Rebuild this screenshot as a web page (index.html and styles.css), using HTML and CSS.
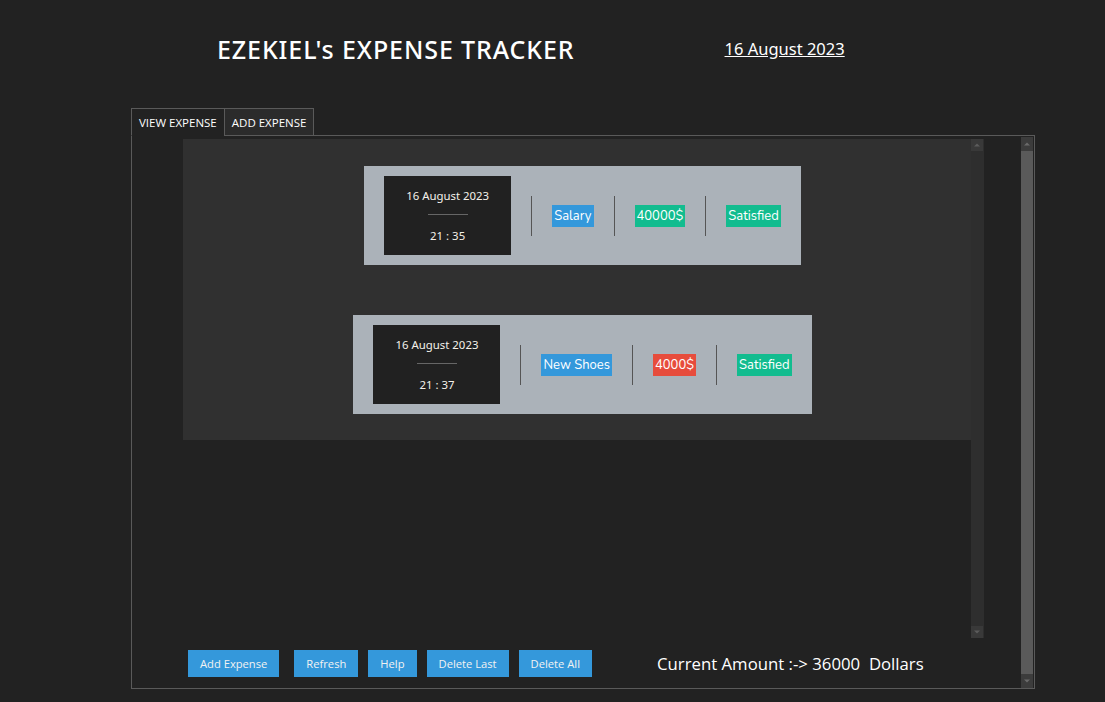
FILE: index.html
```html
<!DOCTYPE html>
<html>
<head>
<meta charset="utf-8">
<title>Expense Tracker</title>
<link rel="stylesheet" href="styles.css">
</head>
<body>
<header class="header">
  <h1 class="title">EZEKIEL's EXPENSE TRACKER</h1>
  <a class="today" href="#">16 August 2023</a>
</header>
<main class="tabs">
  <nav class="tabbar">
    <div class="tab active">VIEW EXPENSE</div>
    <div class="tab">ADD EXPENSE</div>
    <div class="tabfill"></div>
  </nav>
  <section class="panel">
    <div class="page">
      <div class="scrollarea">
        <div class="scrollcontent">
          <div class="list">
            <div class="card">
              <div class="stamp">
                <div class="stamp-date">16 August 2023</div>
                <div class="stamp-line"></div>
                <div class="stamp-time">21 : 35</div>
              </div>
              <div class="sep"></div>
              <span class="badge blue">Salary</span>
              <div class="sep"></div>
              <span class="badge green">40000$</span>
              <div class="sep"></div>
              <span class="badge green">Satisfied</span>
            </div>
            <div class="card">
              <div class="stamp">
                <div class="stamp-date">16 August 2023</div>
                <div class="stamp-line"></div>
                <div class="stamp-time">21 : 37</div>
              </div>
              <div class="sep"></div>
              <span class="badge blue">New Shoes</span>
              <div class="sep"></div>
              <span class="badge red">4000$</span>
              <div class="sep"></div>
              <span class="badge green">Satisfied</span>
            </div>
          </div>
        </div>
        <div class="vscroll inner">
          <div class="sbtn"><svg width="12" height="12" viewBox="0 0 12 12"><path d="M3 7.5 L6 4.5 L9 7.5 Z" fill="#5c5c5c"/></svg></div>
          <div class="strack"></div>
          <div class="sbtn"><svg width="12" height="12" viewBox="0 0 12 12"><path d="M3 4.5 L6 7.5 L9 4.5 Z" fill="#5c5c5c"/></svg></div>
        </div>
      </div>
      <div class="actions">
        <button class="btn">Add Expense</button>
        <button class="btn gap-lg">Refresh</button>
        <button class="btn">Help</button>
        <button class="btn">Delete Last</button>
        <button class="btn">Delete All</button>
        <div class="amount">Current Amount :-&gt; 36000  Dollars</div>
      </div>
    </div>
    <div class="vscroll outer">
      <div class="sbtn"><svg width="12" height="12" viewBox="0 0 12 12"><path d="M3 7.5 L6 4.5 L9 7.5 Z" fill="#6a6a6a"/></svg></div>
      <div class="shandle"></div>
      <div class="sbtn"><svg width="12" height="12" viewBox="0 0 12 12"><path d="M3 4.5 L6 7.5 L9 4.5 Z" fill="#6a6a6a"/></svg></div>
    </div>
  </section>
</main>
</body>
</html>
```
FILE: styles.css
```css
html, body {
  margin: 0;
  padding: 0;
}
body {
  background: #222222;
  width: 1105px;
  height: 702px;
  overflow: hidden;
  font-family: "Open Sans", "Noto Sans", sans-serif;
  color: #ffffff;
}
.header {
  display: flex;
  align-items: center;
  height: 108px;
  box-sizing: border-box;
  padding-bottom: 10px;
}
.title {
  margin: 0 0 0 217px;
  font-family: "Noto Sans", "Open Sans", sans-serif;
  font-weight: 500;
  font-size: 25px;
  line-height: 34px;
  letter-spacing: 0.9px;
  color: #ffffff;
}
.today {
  margin-left: 150px;
  font-family: "Noto Sans", sans-serif;
  font-size: 16.5px;
  line-height: 22px;
  color: #ffffff;
  text-decoration: underline;
}
.tabs {
  margin-left: 131px;
  width: 904px;
}
.tabbar {
  display: flex;
  height: 28px;
}
.tab {
  box-sizing: border-box;
  height: 28px;
  padding: 0 7px;
  font-family: "Open Sans", sans-serif;
  font-size: 11.5px;
  line-height: 27px;
  color: #ffffff;
  border: 1px solid #5a5a5a;
  border-bottom: 1px solid #5a5a5a;
  background: #2b2b2b;
}
.tab.active {
  background: #222222;
  border-bottom-color: #222222;
  border-right: none;
}
.tabfill {
  flex: 1;
  border-bottom: 1px solid #5a5a5a;
}
.panel {
  display: flex;
  height: 553px;
  box-sizing: border-box;
  border: 1px solid #5a5a5a;
  border-top: none;
}
.page {
  flex: 1;
  padding: 3px 0 0 51px;
}
.scrollarea {
  display: flex;
  width: 801px;
  height: 499px;
}
.scrollcontent {
  width: 788px;
}
.list {
  background: #303030;
  height: 301px;
  box-sizing: border-box;
  padding: 27px 0 0 11px;
  display: flex;
  flex-direction: column;
  align-items: center;
  gap: 50px;
}
.card {
  display: flex;
  align-items: center;
  gap: 20px;
  background: #abb2b9;
  padding: 10px 20px;
  height: 99px;
  box-sizing: border-box;
}
.stamp {
  width: 127px;
  height: 79px;
  background: #212121;
  display: flex;
  flex-direction: column;
  align-items: center;
  font-family: "Noto Sans", sans-serif;
  font-size: 11.4px;
  color: #f4f1ea;
}
.stamp-date {
  margin-top: 12px;
  line-height: 16px;
}
.stamp-line {
  width: 40px;
  height: 1px;
  background: #666666;
  margin-top: 10px;
}
.stamp-time {
  margin-top: 13px;
  line-height: 16px;
}
.sep {
  width: 1px;
  height: 40px;
  background: #555555;
}
.badge {
  font-family: "Nunito", "Noto Sans", sans-serif;
  font-size: 13px;
  line-height: 22px;
  height: 22px;
  padding: 0 2px;
  color: #ffffff;
}
.blue { background: #3498db; }
.green { background: #12bc8f; }
.red { background: #e74c3c; }
.vscroll {
  display: flex;
  flex-direction: column;
}
.vscroll.inner {
  width: 13px;
  background: #2e2e2e;
}
.vscroll.inner .sbtn {
  width: 12px;
  height: 12px;
  background: #393939;
}
.vscroll.inner .strack {
  flex: 1;
}
.vscroll.outer {
  width: 12px;
  margin: 1px 1px 0 0;
  height: 551px;
  background: #2e2e2e;
}
.vscroll.outer .sbtn {
  height: 14px;
  background: #3c3c3c;
}
.sbtn {
  display: flex;
  align-items: center;
  justify-content: center;
}
.shandle {
  flex: 1;
  background: #5a5a5a;
}
.actions {
  display: flex;
  align-items: center;
  margin-top: 12px;
  padding-left: 5px;
  gap: 10px;
}
.btn {
  height: 27px;
  border: none;
  background: #3498db;
  color: #f2f2f2;
  font-family: "Open Sans", sans-serif;
  font-size: 11.2px;
  padding: 0 12px;
  margin: 0;
}
.btn.gap-lg {
  margin-left: 5px;
}
.amount {
  margin-left: 55px;
  font-family: "Open Sans", sans-serif;
  font-size: 16.75px;
  white-space: pre;
  color: #ffffff;
}
```
